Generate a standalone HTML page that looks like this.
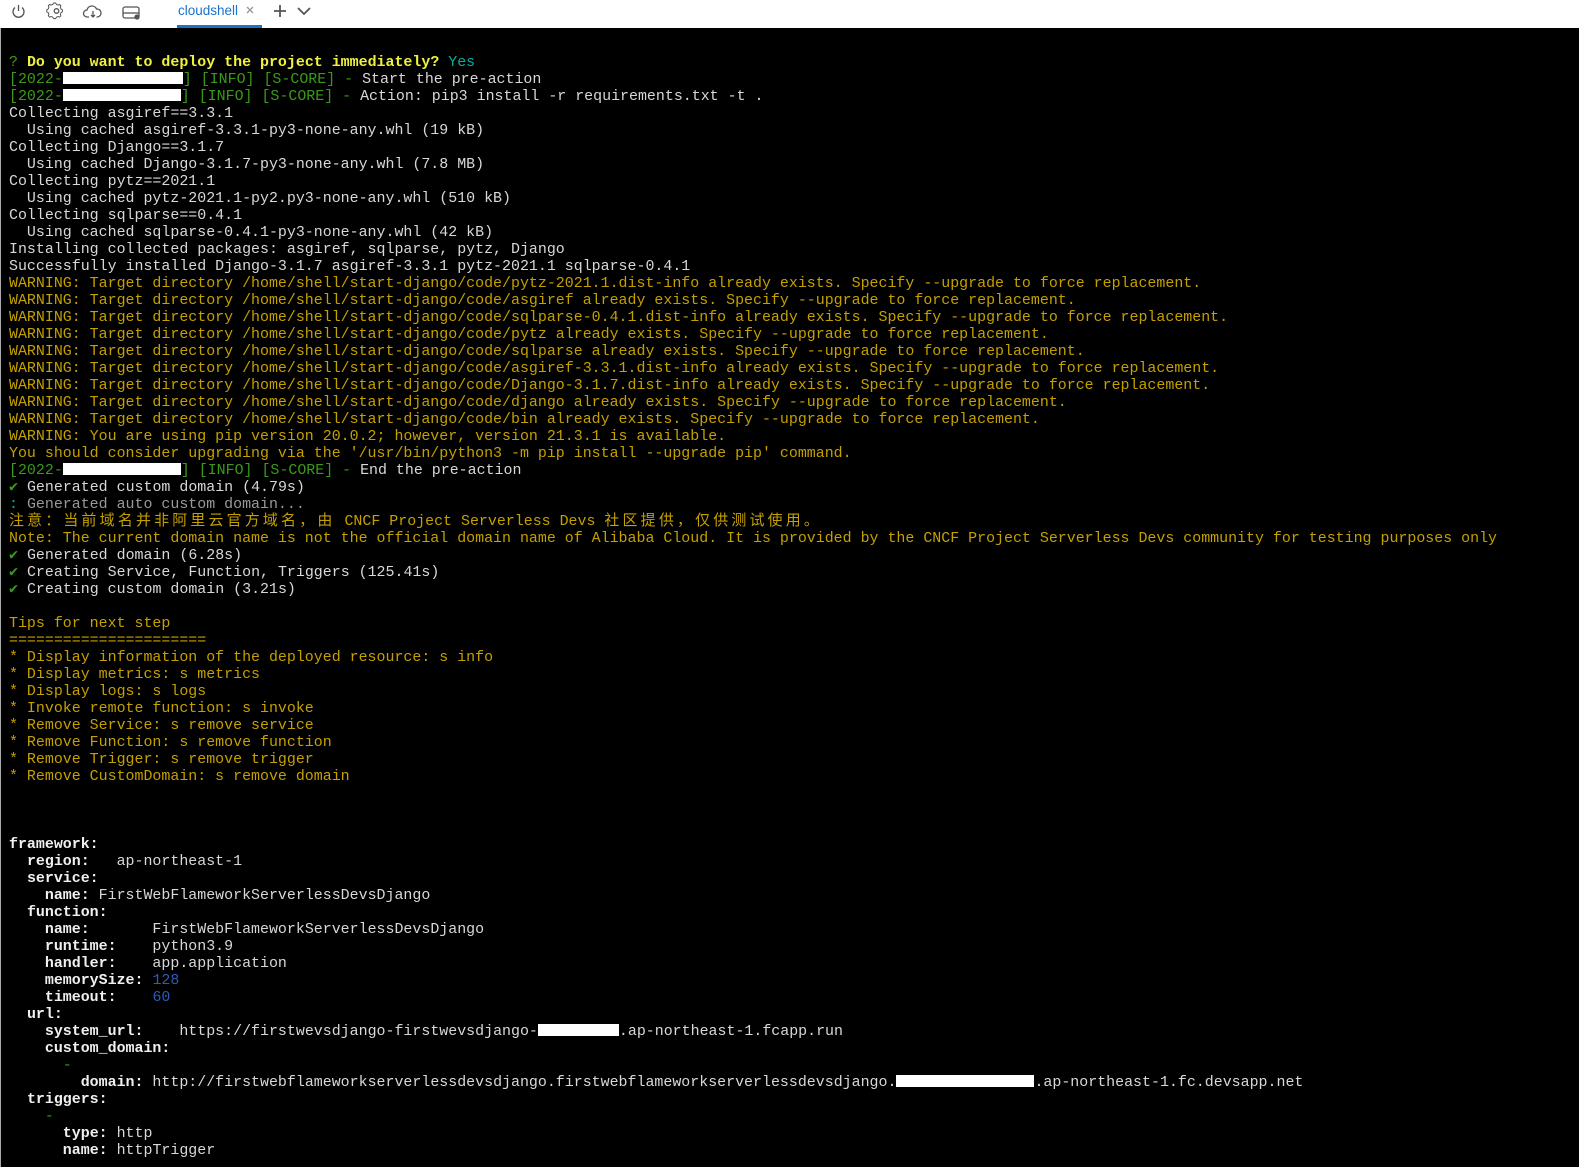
<!DOCTYPE html>
<html><head><meta charset="utf-8">
<style>
*{margin:0;padding:0;box-sizing:border-box}
html,body{width:1579px;height:1167px;overflow:hidden;background:#fff}
#bar{position:absolute;left:0;top:0;width:1579px;height:28px;background:#fff}
#term{position:absolute;left:0;top:28px;width:1579px;height:1139px;background:#000;border-left:1px solid #aaa}
pre{position:absolute;left:8px;top:10px;font-family:"Liberation Mono","Noto Sans CJK SC",monospace;font-size:14.95px;line-height:17px;color:#d8d8d8;white-space:pre}
.y{color:#c4a000}
.Y{color:#f0f040;font-weight:bold}
.g{color:#3a9a1a}
.c{color:#06b0a0}
.b{font-weight:bold;color:#f0f0f0}
.bl{color:#2a5cb8}
.r{display:inline-block;background:#fff;height:12px;vertical-align:-1px}
.cjk{font-family:"Noto Sans CJK SC",sans-serif;letter-spacing:3.2px;line-height:1px}
.ck{color:#3a9a1a;font-weight:bold}
.tab{position:absolute;left:178px;top:3px;font-family:"Liberation Sans",sans-serif;font-size:13.5px;color:#1a73c8}
.ul{position:absolute;left:177px;top:25px;width:85px;height:3px;background:#1a73c8}
</style></head><body>
<div id="bar">
<svg width="400" height="28" style="position:absolute;left:0;top:0" fill="none" stroke="#555" stroke-width="1.3">
<path d="M15 7.5a5.5 5.5 0 1 0 7 0"/><path d="M18.5 5v6"/>
<circle cx="56.5" cy="11" r="2.3"/><path d="M56.5 4.5l1.6.6 1.5-.6 1.3 1.3-.6 1.5.6 1.6 1.5.9v2l-1.5.9-.6 1.6.6 1.5-1.300 1.3-1.5-.6-1.6.6-.9 1.5h-2l-.9-1.5-1.6-.6-1.5.6-1.3-1.3.6-1.5-.6-1.6-1.5-.9v-2l1.5-.9.6-1.6-.6-1.5 1.3-1.3 1.5.6 1.6-.6.9-1.5h2z" stroke-width="1"/>
<path d="M89 17h-2a3.5 3.5 0 0 1 0-7 5 5 0 0 1 9.5-1 4 4 0 0 1 1 8h-1"/><path d="M93 11v6m-2-2l2 2 2-2"/>
<rect x="123" y="7" width="16" height="11" rx="2"/><path d="M123 13h16"/><circle cx="137" cy="17" r="2" fill="#555"/>
<path d="M247 7l6 6m0-6l-6 6" stroke="#999"/>
<path d="M280 5v12m-6-6h12" stroke-width="1.8"/>
<path d="M298 8l6 6 6-6" stroke-width="1.8"/>
</svg>
<div class="tab">cloudshell</div><div class="ul"></div>
</div>
<div id="term"><pre>

<span class="g">?</span> <span class="Y">Do you want to deploy the project immediately?</span> <span class="c">Yes</span>
<span class="g">[2022-</span><span class="r" style="width:120px"></span><span class="g">] [INFO] [S-CORE] - </span>Start the pre-action
<span class="g">[2022-</span><span class="r" style="width:118px"></span><span class="g">] [INFO] [S-CORE] - </span>Action: pip3 install -r requirements.txt -t .
Collecting asgiref==3.3.1
  Using cached asgiref-3.3.1-py3-none-any.whl (19 kB)
Collecting Django==3.1.7
  Using cached Django-3.1.7-py3-none-any.whl (7.8 MB)
Collecting pytz==2021.1
  Using cached pytz-2021.1-py2.py3-none-any.whl (510 kB)
Collecting sqlparse==0.4.1
  Using cached sqlparse-0.4.1-py3-none-any.whl (42 kB)
Installing collected packages: asgiref, sqlparse, pytz, Django
Successfully installed Django-3.1.7 asgiref-3.3.1 pytz-2021.1 sqlparse-0.4.1
<span class="y">WARNING: Target directory /home/shell/start-django/code/pytz-2021.1.dist-info already exists. Specify --upgrade to force replacement.
WARNING: Target directory /home/shell/start-django/code/asgiref already exists. Specify --upgrade to force replacement.
WARNING: Target directory /home/shell/start-django/code/sqlparse-0.4.1.dist-info already exists. Specify --upgrade to force replacement.
WARNING: Target directory /home/shell/start-django/code/pytz already exists. Specify --upgrade to force replacement.
WARNING: Target directory /home/shell/start-django/code/sqlparse already exists. Specify --upgrade to force replacement.
WARNING: Target directory /home/shell/start-django/code/asgiref-3.3.1.dist-info already exists. Specify --upgrade to force replacement.
WARNING: Target directory /home/shell/start-django/code/Django-3.1.7.dist-info already exists. Specify --upgrade to force replacement.
WARNING: Target directory /home/shell/start-django/code/django already exists. Specify --upgrade to force replacement.
WARNING: Target directory /home/shell/start-django/code/bin already exists. Specify --upgrade to force replacement.
WARNING: You are using pip version 20.0.2; however, version 21.3.1 is available.
You should consider upgrading via the '/usr/bin/python3 -m pip install --upgrade pip' command.</span>
<span class="g">[2022-</span><span class="r" style="width:118px"></span><span class="g">] [INFO] [S-CORE] - </span>End the pre-action
<span class="ck">✔</span> Generated custom domain (4.79s)
<span class="c">:</span> <span style="color:#999">Generated auto custom domain...</span>
<span class="y"><span class="cjk">注意：当前域名并非阿里云官方域名，由</span> CNCF Project Serverless Devs <span class="cjk">社区提供，仅供测试使用。</span></span>
<span class="y">Note: The current domain name is not the official domain name of Alibaba Cloud. It is provided by the CNCF Project Serverless Devs community for testing purposes only</span>
<span class="ck">✔</span> Generated domain (6.28s)
<span class="ck">✔</span> Creating Service, Function, Triggers (125.41s)
<span class="ck">✔</span> Creating custom domain (3.21s)

<span class="y">Tips for next step
======================
* Display information of the deployed resource: s info
* Display metrics: s metrics
* Display logs: s logs
* Invoke remote function: s invoke
* Remove Service: s remove service
* Remove Function: s remove function
* Remove Trigger: s remove trigger
* Remove CustomDomain: s remove domain</span>



<span class="b">framework:</span>
  <span class="b">region:</span>   ap-northeast-1
  <span class="b">service:</span>
    <span class="b">name:</span> FirstWebFlameworkServerlessDevsDjango
  <span class="b">function:</span>
    <span class="b">name:</span>       FirstWebFlameworkServerlessDevsDjango
    <span class="b">runtime:</span>    python3.9
    <span class="b">handler:</span>    app.application
    <span class="b">memorySize:</span> <span class="bl">128</span>
    <span class="b">timeout:</span>    <span class="bl">60</span>
  <span class="b">url:</span>
    <span class="b">system_url:</span>    https://firstwevsdjango-firstwevsdjango-<span class="r" style="width:81px"></span>.ap-northeast-1.fcapp.run
    <span class="b">custom_domain:</span>
      <span class="g">-</span>
        <span class="b">domain:</span> http://firstwebflameworkserverlessdevsdjango.firstwebflameworkserverlessdevsdjango.<span class="r" style="width:138px"></span>.ap-northeast-1.fc.devsapp.net
  <span class="b">triggers:</span>
    <span class="g">-</span>
      <span class="b">type:</span> http
      <span class="b">name:</span> httpTrigger
</pre></div>
</body></html>
